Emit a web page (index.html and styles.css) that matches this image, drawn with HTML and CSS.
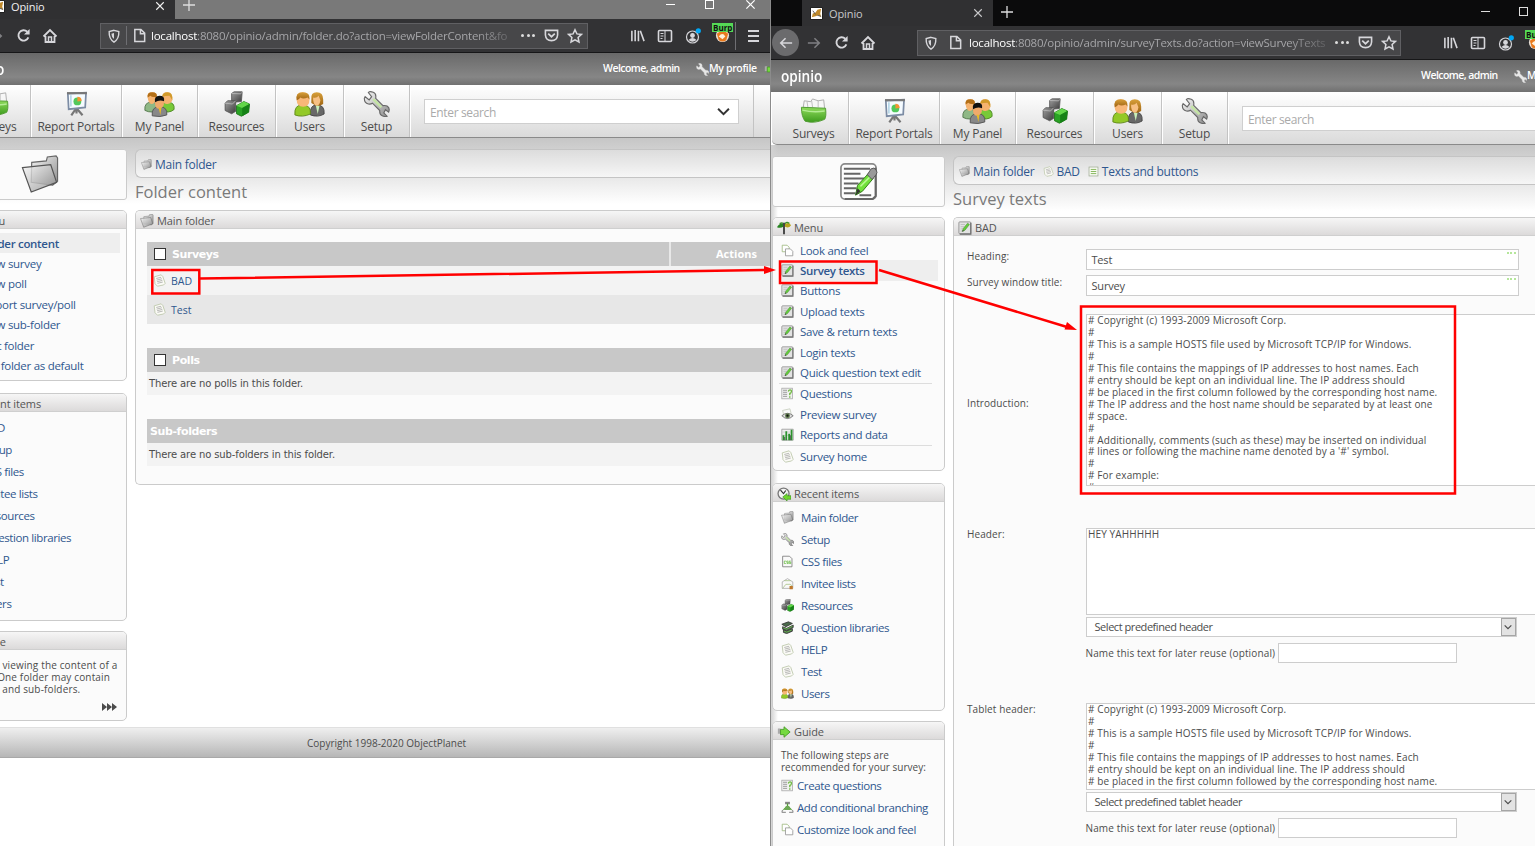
FILE: index.html
```html
<!DOCTYPE html>
<html lang="en">
<head>
<meta charset="utf-8">
<title>Opinio</title>
<link rel="stylesheet" href="styles.css">
</head>
<body>
<svg class="sprite" aria-hidden="true">
  <defs>
    <linearGradient id="gGray" x1="0" y1="0" x2="1" y2="1"><stop offset="0" stop-color="#f6f6f6"/><stop offset="1" stop-color="#8d8d8d"/></linearGradient>
    <linearGradient id="gDark" x1="0" y1="0" x2="1" y2="1"><stop offset="0" stop-color="#a0a0a0"/><stop offset="1" stop-color="#3c3c3c"/></linearGradient>
    <linearGradient id="gGreen" x1="0" y1="0" x2="0" y2="1"><stop offset="0" stop-color="#8fdc5c"/><stop offset="1" stop-color="#3d9b1d"/></linearGradient>
    <linearGradient id="gHair" x1="0" y1="0" x2="0" y2="1"><stop offset="0" stop-color="#d8a03a"/><stop offset="1" stop-color="#9c6110"/></linearGradient>
  </defs>
  <symbol id="folder" viewBox="0 0 40 40"><path d="M11 7.500l15-1.500 1-4 9-1 1.500 2v24l-5 4-22-3z" fill="url(#gGray)" stroke="#666" stroke-width="1.200"/><path d="M1.500 13l9-1V8l15-1.500 1.500 4 3.500-1 6 17-26 11z" fill="none"/><path d="M1.500 13l29-3 6 18-26 10z" fill="url(#gGray)" fill-opacity=".8" stroke="#555" stroke-width="1.200"/></symbol>
  <symbol id="note" viewBox="0 0 16 16"><path d="M1.500 3.500l8.500-2.500 2 2 3 8.500-2 2-7.500 1.500L2.500 12z" fill="#fbfbf6" stroke="#b9c4a6"/><path d="M4 5.500l6-1.500M4.500 7.500l6.500-1.600M5 9.500l6.500-1.600M5.500 11.500l6.500-1.600" stroke="#a0a0a0" fill="none" stroke-width=".9"/></symbol>
  <symbol id="textedit" viewBox="0 0 16 16"><rect x="1" y="1" width="13.500" height="13.500" rx="1" fill="#e2e2e2" stroke="#909090"/><path d="M14.700 2v13H2" fill="none" stroke="#6c6c6c" stroke-width="1.400"/><path d="M3 4h5M3 6.500h4M3 9h3M3 11.500h2" stroke="#bbb"/><path d="M5 12l1-3.500 5-6 2 1.500-5 6.500z" fill="#62cf3a" stroke="#4b7d35" stroke-width=".6"/><path d="M5 12l1.700-.6-1.200-1.200z" fill="#333"/></symbol>
  <symbol id="textlarge" viewBox="0 0 40 40"><rect x="2" y="2" width="36" height="36" rx="4" fill="#fdfdfd" stroke="#8a8a8a" stroke-width="1.800"/><path d="M37.500 6v29l-3 3H6" fill="none" stroke="#666" stroke-width="2"/><path d="M5 7h27M5 12h17M5 17h21M5 22h15M5 27h13M5 32h12M21 34h12" stroke="#666" stroke-width="2"/><path d="M17 34l2-10 11-12 5 5-11 13z" fill="#72e13c" stroke="#317819"/><path d="M22 25l10-10" stroke="#b9f893" stroke-width="1.500"/><path d="M29 13l4-6q3-2 5 1t0 5l-4 5z" fill="#999" stroke="#555"/><path d="M17 34l5-4-3-3z" fill="#333"/></symbol>
  <symbol id="copy" viewBox="0 0 16 16"><path d="M1.500 1.500h6l2.500 2.500v5.500h-8.500z" fill="#fff" stroke="#9cb87c"/><path d="M5.500 6h6l3 3v5.500h-9z" fill="#fff" stroke="#929292"/></symbol>
  <symbol id="quest" viewBox="0 0 16 16"><rect x="1" y="1.500" width="13" height="13" fill="#f2f2f2" stroke="#aaa"/><path d="M2.500 4h5M2.500 6.500h5M2.500 9h5M2.500 11.500h5" stroke="#888"/><path d="M9 5.500q.5-2 2.200-2t1.600 2-2 2.500v2M10.800 11.500v1.800" stroke="#6fba3f" stroke-width="1.600" fill="none"/></symbol>
  <symbol id="lines" viewBox="0 0 16 16"><rect x="1.500" y="1.500" width="13" height="13" fill="#f7fbf2" stroke="#9aa58e"/><path d="M4 5h8M4 8h8M4 11h8" stroke="#86b65c" stroke-width="1.400"/></symbol>
  <symbol id="eye" viewBox="0 0 16 16"><path d="M2 3l9-2 2 8-9 2z" fill="#fafafa" stroke="#c5cdbb"/><path d="M1 9.500q7-6 14 0-7 7-14 0z" fill="#ddd" stroke="#666"/><circle cx="8" cy="9.500" r="3" fill="#5d7a4a"/><circle cx="8" cy="9.500" r="1.400" fill="#111"/></symbol>
  <symbol id="chart" viewBox="0 0 16 16"><path d="M1 1.500h14v13.500H1z" fill="#eee" stroke="#999"/><path d="M1 5h14M1 9h14" stroke="#ccc"/><path d="M3 15V9M6.500 15V4M10 15V7M13 15V2" stroke="#2b922d" stroke-width="2.200"/><path d="M4.500 15v-4M11.600 15V9" stroke="#444"/></symbol>
  <symbol id="palm" viewBox="0 0 16 16"><path d="M8 4Q3 1 0 7q4 2 8-1z" fill="#278421"/><path d="M8 4q6-4 8 1-3 4-8 1z" fill="#b7a51f"/><path d="M3 3q4-2 5 1.500Q10 0 14 2.500" stroke="#3b8f27" fill="none" stroke-width="1.500"/><path d="M8 2v13" stroke="#444" stroke-width="2.200"/></symbol>
  <symbol id="clock" viewBox="0 0 16 16"><circle cx="7.500" cy="7.500" r="6.300" fill="#f4f4f4" stroke="#777" stroke-width="1.500"/><path d="M4 3.500l3.500 4L10 4" stroke="#333" fill="none" stroke-width="1.300"/><path d="M6.500 11.500l5-4v2.500H16v4h-4.500V16z" fill="#70d82e" stroke="#35881b" stroke-width=".7"/></symbol>
  <symbol id="guide" viewBox="0 0 16 16"><path d="M1 4h3v6H1z" fill="#aaa"/><path d="M4 5h4V2l7 6-7 6v-3H4z" fill="#76da40" stroke="#479a26"/></symbol>
  <symbol id="wrench" viewBox="0 0 32 32"><path d="M7 1l-1 1 4 5-3 4-5-4-1 2q0 6 5 7 3 .5 5-1l9 9q-.5 5 3 6.500t6 .5l-4-4 2-4 4 3q2-5-2-7.500-2-1-5-.5l-9-9q1-6-3-7.500Q9 .5 7 1z" fill="url(#gGray)" stroke="#686868" stroke-width="1.400"/><path d="M12 10l10 10" stroke="#c5e6a4" stroke-width="3"/></symbol>
  <symbol id="wrenchlight" viewBox="0 0 32 32"><path d="M7 1l-1 1 4 5-3 4-5-4-1 2q0 6 5 7 3 .5 5-1l9 9q-.5 5 3 6.500t6 .5l-4-4 2-4 4 3q2-5-2-7.500-2-1-5-.5l-9-9q1-6-3-7.500Q9 .5 7 1z" fill="#e8e8e8" stroke="#c4c4c4"/></symbol>
  <symbol id="css" viewBox="0 0 16 16"><path d="M2 1.500h8.500l3 3v10H2z" fill="#fafafa" stroke="#777"/><path d="M6 7.500H4v3h2M9 7.500H7v1.500h2v1.500H7M12 7.500h-2v1.500h2v1.500h-2" fill="none" stroke="#62b938" stroke-width=".9"/></symbol>
  <symbol id="mail" viewBox="0 0 16 16"><path d="M1.500 6L8 2l6.500 4v8h-13z" fill="#f9f9f9" stroke="#aaa"/><path d="M2 14l4-5h5l3 2M4 4.500h8" fill="none" stroke="#a9c188"/><path d="M10.500 11h4v4h-4z" fill="#bf792c"/></symbol>
  <symbol id="cubes" viewBox="0 0 32 32"><path d="M10 3l3-2h10l-1 12-12 1z" fill="url(#gDark)" stroke="#555"/><path d="M2 15l3-3h10v13l-5 3-8-4z" fill="url(#gDark)" stroke="#505050"/><path d="M10 3l11 .500 2-2M2 15l9 1 4-4" stroke="#bbb" fill="none"/><path d="M16 18l9-5 7 3-1 10-9 5-6-3z" fill="#29a224" stroke="#176b12"/><path d="M16 18l7 3 9-5-7-3z" fill="#62d649"/><path d="M23 21v10l8-5 1-10z" fill="#168216"/></symbol>
  <symbol id="books" viewBox="0 0 16 16"><path d="M1 4l8-3 5 2-8 4zM2 7v3l5 2 8-4V5l-8 4zM3 11v3l4 1.500 7-3v-3l-7 3z" fill="#4c6b4c" stroke="#333"/><path d="M3 8.500l4 1.500 7-3.500M4 12.500l3 1.200 6-2.500" stroke="#6ebd52" fill="none"/></symbol>
  <symbol id="branch" viewBox="0 0 16 16"><path d="M5 1h6v3H5z" fill="#888"/><path d="M8 3v4M8 6l-5 5M8 6l5 5" stroke="#55a037" fill="none" stroke-width="1.500"/><path d="M6 6h4l2 5H4z" fill="#6da856"/><path d="M1 14h5M10 14h5M2 11l-1 3M14 11l1 3" stroke="#999" stroke-width="1.500"/></symbol>
  <symbol id="users" viewBox="0 0 34 28"><path d="M18 26q-1-11 7-11 9 0 8 10-7 4-15 1z" fill="#686868" stroke="#444"/><path d="M19 9q-1-8 6-8 7 0 7 8v5l-6 3-7-4z" fill="url(#gHair)"/><path d="M21 7q4 1 6-2l2 5q-1 6-4 6t-4-6z" fill="#f7c084"/><path d="M24 16l2 9 2-9z" fill="#c8efb8"/><path d="M1 26q-1-11 8-11 10 0 9 10-9 4-17 1z" fill="#93c927" stroke="#5f8619"/><path d="M3 10Q2 1 9.500 1T17 9q0 8-7 8T3 10z" fill="#f8b778"/><path d="M3 10Q1 1 9.500 1T17 9l-2-2q-5 2-8 0-1 2-4 3z" fill="url(#gHair)"/></symbol>
  <symbol id="panel" viewBox="0 0 34 28"><path d="M1 21q-1-9 7-9t8 8q-7 5-15 1z" fill="#8fb886" stroke="#54774d"/><path d="M19 21q-1-9 7-9t7 8q-6 5-14 1z" fill="#78c938" stroke="#4a8720"/><path d="M4 7q-1-6 5-6t5 6-5 7-5-7z" fill="#f5b36f"/><path d="M4 7q-1-6 5-6t5 5q-5 1-7-1z" fill="#b36f17"/><path d="M20 7q0-6 5-6t6 6-5 7-6-7z" fill="#f5b36f"/><path d="M20 6q0-5 6-5t5 9l-3-5q-5 0-8 1z" fill="#d19a2b"/><path d="M9 27q-1-10 8-10t8 9q-7 3-16 1z" fill="#888" stroke="#555"/><path d="M12 12q0-6 5-6t5 6-5 7-5-7z" fill="#efaa6c"/><path d="M12 12q-1-7 5-7t5 6q-5-2-10 1z" fill="#111"/><path d="M16 18h3l-1 8z" fill="#e9bd24"/></symbol>
  <symbol id="board" viewBox="0 0 30 30"><path d="M14 21l-5 7M16 21l6 7M15 20v6" stroke="#777" stroke-width="2.500"/><path d="M5 3l21-1-1 17-19 2z" fill="#f5fbff" stroke="#7c8ca4" stroke-width="2"/><path d="M4 2.500h23" stroke="#777" stroke-width="2.500"/><circle cx="16" cy="12" r="4.500" fill="#51c85b"/><path d="M16 12V6.500q5 0 5 5z" fill="#f39533"/><path d="M8.500 5v13" stroke="#b8d8e8" stroke-width="2"/></symbol>
  <symbol id="box" viewBox="0 0 30 28"><path d="M4 10l1-7 7 1 2-3 6 2 6-1 1 10z" fill="#f7f7f7" stroke="#aaa"/><path d="M8 4l1 6M13 3l1 7M20 3v7" stroke="#bbb"/><path d="M2 10l26 1q1 9-1 12-11 5-21 2Q2 20 2 10z" fill="url(#gGreen)" stroke="#4f9a31"/><path d="M3 13q12 3 24 1" stroke="#b4ec94" fill="none" stroke-width="1.500"/></symbol>
  <symbol id="reload" viewBox="0 0 16 16"><path d="M13.200 10A5.500 5.500 0 1 1 12 4" fill="none" stroke="currentColor" stroke-width="2"/><path d="M14.500 1v6H8.500z" fill="currentColor"/></symbol>
  <symbol id="home" viewBox="0 0 16 16"><path d="M1.500 8.500L8 2l6.500 6.500M3.500 8v6h9V8" fill="none" stroke="currentColor" stroke-width="1.800"/><path d="M6.500 14V9h3v5" fill="none" stroke="currentColor" stroke-width="1.500"/></symbol>
  <symbol id="arrow" viewBox="0 0 16 16"><path d="M8.500 2.500L14 8l-5.500 5.500M14 8H1" fill="none" stroke="currentColor" stroke-width="1.800"/></symbol>
  <symbol id="shield" viewBox="0 0 16 16"><path d="M8 1.500l5.500 1.500q.5 8-5.500 12-6-4-5.500-12z" fill="none" stroke="currentColor" stroke-width="1.600"/><path d="M8 4.500v7q-3-2.500-3-6z" fill="currentColor"/></symbol>
  <symbol id="page" viewBox="0 0 16 16"><path d="M3 1.500h6.500l4 4V14.500H3zM9 2v4h4" fill="none" stroke="currentColor" stroke-width="1.600"/></symbol>
  <symbol id="pocket" viewBox="0 0 16 16"><path d="M1.500 2.500h13v5q-.5 6-6.500 6t-6.500-6z" fill="none" stroke="currentColor" stroke-width="1.700"/><path d="M4.500 6L8 9.300 11.500 6" fill="none" stroke="currentColor" stroke-width="1.800"/></symbol>
  <symbol id="star" viewBox="0 0 16 16"><path d="M8 1.800l1.900 4.100 4.500.5-3.300 3.100.9 4.500L8 11.800 4 14l.9-4.500L1.600 6.400l4.500-.5z" fill="none" stroke="currentColor" stroke-width="1.500"/></symbol>
  <symbol id="library" viewBox="0 0 16 16"><path d="M2 3v11M5.500 2v12M9 3v11M11 3l4 11" fill="none" stroke="currentColor" stroke-width="1.700"/></symbol>
  <symbol id="sidebar" viewBox="0 0 16 16"><rect x="1.500" y="2.500" width="13" height="11" rx="1" fill="none" stroke="currentColor" stroke-width="1.600"/><path d="M8 3v10M3.500 5.500h3M3.500 8h3M3.500 10.500h2" stroke="currentColor" fill="none"/></symbol>
  <symbol id="account" viewBox="0 0 16 16"><circle cx="7.500" cy="9" r="6" fill="none" stroke="currentColor" stroke-width="1.200"/><circle cx="7.500" cy="7.500" r="2.400" fill="currentColor"/><path d="M3.500 12q4-4 8 0-4 3.500-8 0z" fill="currentColor"/><circle cx="13.300" cy="2.800" r="2.600" fill="#00a7f5"/></symbol>
  <symbol id="fox" viewBox="0 0 16 16"><circle cx="8" cy="8" r="7" fill="#e8dfd7"/><path d="M2 6q6-5 12 0l-2 7q-4 3-8 0z" fill="#e97a1d"/><path d="M4 9q4-5 7 0l-3 3z" fill="#fff0da"/></symbol>
  <symbol id="cross" viewBox="0 0 12 12"><path d="M1.500 1.500l9 9M10.500 1.500l-9 9" stroke="currentColor" stroke-width="1.300"/></symbol>
  <symbol id="plus" viewBox="0 0 12 12"><path d="M6 0v12M0 6h12" stroke="currentColor" stroke-width="1.300"/></symbol>
  <symbol id="chev" viewBox="0 0 12 12"><path d="M1 3.500l5 5 5-5" fill="none" stroke="currentColor" stroke-width="1.800"/></symbol>
  <symbol id="favicon" viewBox="0 0 14 14"><path d="M.5.500h13v13H.5z" fill="#fff" stroke="#111"/><path d="M2 11l1-4 3-1 2-3 4-1-1 5 1 4-3-2-3 1z" fill="#c18a2b"/><path d="M3 4l3 4M8 9l4 1" stroke="#555"/></symbol>
</svg>

<div class="desktop">
<section class="view view-left">
 <div class="window">
  <div class="tabs">
    <div class="tab"><svg class="i13"><use href="#favicon"/></svg><span>Opinio</span><svg class="i10 close"><use href="#cross"/></svg></div>
    <svg class="i12 newtab"><use href="#plus"/></svg>
    <div class="winbtns"><i class="min"></i><i class="max"></i><svg class="i11"><use href="#cross"/></svg></div>
  </div>
  <div class="toolbar">
    <span class="slot back"><svg class="i14 flip"><use href="#arrow"/></svg></span><span class="slot fwd"><svg class="i14"><use href="#arrow"/></svg></span><span class="slot rel"><svg class="i15"><use href="#reload"/></svg></span><span class="slot"><svg class="i16"><use href="#home"/></svg></span>
    <div class="url"><svg class="i14"><use href="#shield"/></svg><i class="bar"></i><svg class="i15"><use href="#page"/></svg><p class="addr addr-a"><b>localhost</b>:8080/opinio/admin/folder.do?action=viewFolderContent&amp;fo</p><em class="dots"><i></i><i></i><i></i></em><svg class="i15"><use href="#pocket"/></svg><svg class="i16"><use href="#star"/></svg></div>
    <div class="tools"><svg class="i15"><use href="#library"/></svg><svg class="i16"><use href="#sidebar"/></svg><svg class="i16"><use href="#account"/></svg><span class="burp"><svg class="i15"><use href="#fox"/></svg><b>Burp</b></span><i class="bar tall"></i><span class="burger"><i></i><i></i><i></i></span></div>
  </div>
  <div class="app">
   <header class="brand"><strong>opinio</strong><span class="hello">Welcome, admin</span><svg class="i13"><use href="#wrenchlight"/></svg><span class="prof">My profile</span><svg class="i13 out"><use href="#guide"/></svg></header>
   <nav class="nav">
     <a class="n1"><svg class="ic"><use href="#box"/></svg>Surveys</a><a class="n2"><svg class="ic"><use href="#board"/></svg>Report Portals</a><a class="n3"><svg class="ic"><use href="#panel"/></svg>My Panel</a><a class="n4"><svg class="ic"><use href="#cubes"/></svg>Resources</a><a class="n5"><svg class="ic"><use href="#users"/></svg>Users</a><a class="n6"><svg class="ic"><use href="#wrench"/></svg>Setup</a>
     <div class="searchcell"><div class="search"><span>Enter search</span><svg class="i13"><use href="#chev"/></svg></div></div>
   </nav>
   <div class="body">
    <aside class="side">
      <div class="emblem"><svg class="i40"><use href="#folder"/></svg></div>
      <div class="card menu"><h3><svg class="i14"><use href="#palm"/></svg>Menu</h3>
        <ul><li class="on"><svg class="i13"><use href="#folder"/></svg><span>Folder content</span></li><li><svg class="i13"><use href="#note"/></svg>New survey</li><li><svg class="i13"><use href="#note"/></svg>New poll</li><li><svg class="i13"><use href="#note"/></svg>Import survey/poll</li><li><svg class="i13"><use href="#folder"/></svg>New sub-folder</li><li><svg class="i13"><use href="#folder"/></svg>Edit folder</li><li><svg class="i13"><use href="#folder"/></svg>Set folder as default</li></ul></div>
      <div class="card recent"><h3><svg class="i14"><use href="#clock"/></svg>Recent items</h3>
        <ul><li><svg class="i13"><use href="#note"/></svg>BAD</li><li><svg class="i13"><use href="#wrench"/></svg>Setup</li><li><svg class="i13"><use href="#css"/></svg>CSS files</li><li><svg class="i13"><use href="#mail"/></svg>Invitee lists</li><li><svg class="i13"><use href="#cubes"/></svg>Resources</li><li><svg class="i13"><use href="#books"/></svg>Question libraries</li><li><svg class="i13"><use href="#note"/></svg>HELP</li><li><svg class="i13"><use href="#note"/></svg>Test</li><li><svg class="i13"><use href="#users"/></svg>Users</li></ul></div>
      <div class="card guide"><h3><svg class="i14"><use href="#guide"/></svg>Guide</h3>
        <p>You are viewing the content of a<br>folder. One folder may contain<br>surveys and sub-folders.</p>
        <svg class="more" viewBox="0 0 15 8"><path d="M0 0l5 4-5 4zM5 0l5 4-5 4zM10 0l5 4-5 4z" fill="#4c4c4c"/></svg></div>
    </aside>
    <main class="main">
      <div class="crumbs"><svg class="i11"><use href="#folder"/></svg><span>Main folder</span></div>
      <h1>Folder content</h1>
      <div class="card wide list"><h3><svg class="i14"><use href="#folder"/></svg>Main folder</h3>
        <div class="tbl">
          <div class="th"><i class="box"></i><b>Surveys</b><b class="act">Actions</b></div>
          <div class="tr odd"><svg class="i13"><use href="#note"/></svg>BAD</div>
          <div class="tr"><svg class="i13"><use href="#note"/></svg>Test</div>
          <div class="th gap"><i class="box"></i><b>Polls</b></div>
          <div class="none">There are no polls in this folder.</div>
          <div class="th gap sub"><b>Sub-folders</b></div>
          <div class="none">There are no sub-folders in this folder.</div>
        </div>
      </div>
    </main>
   </div>
   <footer class="foot">Copyright 1998-2020 ObjectPlanet</footer>
  </div>
 </div>
</section>

<section class="view view-right">
 <div class="window">
  <div class="tabs">
    <div class="tab"><svg class="i13"><use href="#favicon"/></svg><span>Opinio</span><svg class="i10 close"><use href="#cross"/></svg></div>
    <svg class="i12 newtab"><use href="#plus"/></svg>
    <div class="winbtns"><i class="min"></i><i class="max"></i></div>
  </div>
  <div class="toolbar">
    <span class="slot back"><svg class="i14 flip"><use href="#arrow"/></svg></span><span class="slot fwd"><svg class="i14"><use href="#arrow"/></svg></span><span class="slot rel"><svg class="i15"><use href="#reload"/></svg></span><span class="slot"><svg class="i16"><use href="#home"/></svg></span>
    <div class="url"><svg class="i14"><use href="#shield"/></svg><i class="bar"></i><svg class="i15"><use href="#page"/></svg><p class="addr"><b>localhost</b>:8080/opinio/admin/surveyTexts.do?action=viewSurveyTexts</p><em class="dots"><i></i><i></i><i></i></em><svg class="i15"><use href="#pocket"/></svg><svg class="i16"><use href="#star"/></svg></div>
    <div class="tools"><svg class="i15"><use href="#library"/></svg><svg class="i16"><use href="#sidebar"/></svg><svg class="i16"><use href="#account"/></svg><span class="burp"><svg class="i15"><use href="#fox"/></svg><b>Burp</b></span></div>
  </div>
  <div class="app">
   <header class="brand"><strong>opinio</strong><span class="hello">Welcome, admin</span><svg class="i13"><use href="#wrenchlight"/></svg><span class="prof">My profile</span></header>
   <nav class="nav">
     <a class="n1"><svg class="ic"><use href="#box"/></svg>Surveys</a><a class="n2"><svg class="ic"><use href="#board"/></svg>Report Portals</a><a class="n3"><svg class="ic"><use href="#panel"/></svg>My Panel</a><a class="n4"><svg class="ic"><use href="#cubes"/></svg>Resources</a><a class="n5"><svg class="ic"><use href="#users"/></svg>Users</a><a class="n6"><svg class="ic"><use href="#wrench"/></svg>Setup</a>
     <div class="searchcell"><div class="search"><span>Enter search</span></div></div>
   </nav>
   <div class="body">
    <aside class="side">
      <div class="emblem"><svg class="i40"><use href="#textlarge"/></svg></div>
      <div class="card menu"><h3><svg class="i14"><use href="#palm"/></svg>Menu</h3>
        <ul><li><svg class="i13"><use href="#copy"/></svg>Look and feel</li><li class="on"><svg class="i13"><use href="#textedit"/></svg><span>Survey texts</span></li><li><svg class="i13"><use href="#textedit"/></svg>Buttons</li><li><svg class="i13"><use href="#textedit"/></svg>Upload texts</li><li><svg class="i13"><use href="#textedit"/></svg>Save &amp; return texts</li><li><svg class="i13"><use href="#textedit"/></svg>Login texts</li><li><svg class="i13"><use href="#textedit"/></svg>Quick question text edit</li><li class="rule"><svg class="i13"><use href="#quest"/></svg>Questions</li><li><svg class="i13"><use href="#eye"/></svg>Preview survey</li><li><svg class="i13"><use href="#chart"/></svg>Reports and data</li><li class="rule"><svg class="i13"><use href="#note"/></svg>Survey home</li></ul></div>
      <div class="card recent"><h3><svg class="i14"><use href="#clock"/></svg>Recent items</h3>
        <ul><li><svg class="i13"><use href="#folder"/></svg>Main folder</li><li><svg class="i13"><use href="#wrench"/></svg>Setup</li><li><svg class="i13"><use href="#css"/></svg>CSS files</li><li><svg class="i13"><use href="#mail"/></svg>Invitee lists</li><li><svg class="i13"><use href="#cubes"/></svg>Resources</li><li><svg class="i13"><use href="#books"/></svg>Question libraries</li><li><svg class="i13"><use href="#note"/></svg>HELP</li><li><svg class="i13"><use href="#note"/></svg>Test</li><li><svg class="i13"><use href="#users"/></svg>Users</li></ul></div>
      <div class="card guide steps"><h3><svg class="i14"><use href="#guide"/></svg>Guide</h3>
        <p>The following steps are<br>recommended for your survey:</p>
        <ul><li><svg class="i13"><use href="#quest"/></svg>Create questions</li><li><svg class="i13"><use href="#branch"/></svg>Add conditional branching</li><li><svg class="i13"><use href="#copy"/></svg>Customize look and feel</li></ul></div>
    </aside>
    <main class="main">
      <div class="crumbs"><svg class="i11"><use href="#folder"/></svg><span>Main folder</span><svg class="i11"><use href="#note"/></svg><span>BAD</span><svg class="i11"><use href="#lines"/></svg><span>Texts and buttons</span></div>
      <h1>Survey texts</h1>
      <div class="card wide form"><h3><svg class="i14"><use href="#textedit"/></svg>BAD</h3>
        <div class="row r1"><label>Heading:</label><div class="inp">Test<em class="gd"></em></div></div>
        <div class="row r2"><label>Survey window title:</label><div class="inp">Survey<em class="gd"></em></div></div>
        <div class="row r3"><label>Introduction:</label><pre class="area tall"># Copyright (c) 1993-2009 Microsoft Corp.
#
# This is a sample HOSTS file used by Microsoft TCP/IP for Windows.
#
# This file contains the mappings of IP addresses to host names. Each
# entry should be kept on an individual line. The IP address should
# be placed in the first column followed by the corresponding host name.
# The IP address and the host name should be separated by at least one
# space.
#
# Additionally, comments (such as these) may be inserted on individual
# lines or following the machine name denoted by a '#' symbol.
#
# For example:
#</pre></div>
        <div class="row r4"><label>Header:</label><div class="stack"><pre class="area">HEY YAHHHHH</pre><div class="sel">Select predefined header<span><svg class="i10"><use href="#chev"/></svg></span></div><div class="reuse">Name this text for later reuse (optional)<i></i></div></div></div>
        <div class="row r5"><label>Tablet header:</label><div class="stack"><pre class="area"># Copyright (c) 1993-2009 Microsoft Corp.
#
# This is a sample HOSTS file used by Microsoft TCP/IP for Windows.
#
# This file contains the mappings of IP addresses to host names. Each
# entry should be kept on an individual line. The IP address should
# be placed in the first column followed by the corresponding host name.</pre><div class="sel">Select predefined tablet header<span><svg class="i10"><use href="#chev"/></svg></span></div><div class="reuse">Name this text for later reuse (optional)<i></i></div></div></div>
      </div>
    </main>
   </div>
  </div>
 </div>
</section>
</div>

<svg class="marks" viewBox="0 0 1535 846">
  <g fill="none" stroke="#f00" stroke-width="2.500">
    <path d="M152.300 270h47v23.500h-47zM780 261.500h96.500v21.500H780z"/>
    <path d="M1081 306.500h374v187h-374z"/>
    <path d="M200 278.500L768 270M879 270l188 57"/>
  </g>
  <path d="M776 270l-12-4v8zM1077 330l-12.500-.5 2.500-7.500z" fill="#f00"/>
</svg>
</body>
</html>
```
FILE: styles.css
```css
* { box-sizing: border-box; }
body { margin: 0; width: 1535px; height: 846px; overflow: hidden; background: #fff; position: relative; font-family: "Open Sans", "Noto Sans", sans-serif; font-size: 11px; color: #4c4c4c; white-space: nowrap; }
h1, h3, p, ul, pre { margin: 0; padding: 0; font-weight: normal; }
ul { list-style: none; }
i, em { font-style: normal; }
svg { flex: none; display: block; }
.sprite { position: absolute; width: 0; height: 0; }
.marks { position: absolute; left: 0; top: 0; width: 1535px; height: 846px; }
.i10 { width: 10px; height: 10px; } .i11 { width: 11px; height: 11px; } .i12 { width: 12px; height: 12px; }
.i13 { width: 13px; height: 13px; } .i14 { width: 14px; height: 14px; } .i15 { width: 15px; height: 15px; }
.i16 { width: 16px; height: 16px; } .i40 { width: 39px; height: 39px; }

.desktop { display: flex; width: 1535px; height: 846px; }
.view { height: 846px; overflow: hidden; flex: none; }
.view-left { width: 770px; }
.view-right { width: 765px; border-left: 1px solid #8b8b8b; }
.view-left .window { margin: -7px 0 0 -48px; width: 818px; }
.view-right .window { margin-left: -1px; width: 765px; }

/* browser chrome */
.tabs { height: 26px; display: flex; align-items: center; background: #0b0b0c; color: #c9c9cb; }
.view-left .tabs { background: #797979; }
.tab { width: 191px; height: 26px; margin-left: 32px; padding: 0 10px 0 8px; background: #303032; display: flex; align-items: center; gap: 6px; font-size: 11px; }
.view-left .tab { color: #f2f2f2; }
.tab span { letter-spacing: -.1px; }
.tab .close { margin-left: auto; }
.newtab { margin-left: 8px; margin-top: -2px; color: #ddd; }
.winbtns { margin-left: auto; display: flex; align-items: center; gap: 29px; padding-right: 7px; margin-top: -3px; color: #ddd; }
.winbtns .min { width: 9px; height: 1px; background: currentColor; }
.winbtns .max { width: 9px; height: 9px; border: 1px solid currentColor; }
.view-left .winbtns { gap: 30px; padding-right: 14px; color: #fff; }
.view-left .winbtns svg { margin-left: 1px; }
.toolbar { height: 34px; background: #323234; border-bottom: 1px solid #171718; display: flex; align-items: center; padding-left: 2px; color: #d7d7db; }
.toolbar > * { flex: none; }
.slot { width: 27px; height: 27px; display: flex; align-items: center; justify-content: center; }
.back { background: #6b6b6d; border-radius: 50%; }
.fwd { width: 30px; color: #7f7f82; } .rel { width: 25px; }
.flip { transform: scaleX(-1); }
.url { margin-left: 36px; width: 484px; height: 26px; background: #474749; border: 1px solid #606063; display: flex; align-items: center; padding: 0 4px 0 6px; }
.view-left .url { width: 488px; margin-left: 37px; }
.bar { width: 1px; height: 19px; background: #6f6f73; margin: 0 5px; }
.addr { flex: none; width: 358px; margin-left: 6px; overflow: hidden; font-size: 11.5px; letter-spacing: -.23px; line-height: 20px; color: #a5a5a8; -webkit-mask-image: linear-gradient(90deg, #000 89%, rgba(0,0,0,.25)); mask-image: linear-gradient(90deg, #000 89%, rgba(0,0,0,.25)); }
.addr-a { width: 362px; margin-left: 4px; }
.addr b { font-weight: normal; color: #fff; }
.dots { display: flex; gap: 2.500px; margin: 0 9px 0 8px; }
.dots i { width: 3px; height: 3px; border-radius: 50%; background: #ddd; }
.url .i16 { margin-left: 8px; }
.tools { display: flex; align-items: center; gap: 12px; margin-left: 42px; }
.burp { position: relative; width: 21px; display: flex; justify-content: center; margin-left: -1px; }
.burp b { position: absolute; left: 0; top: -5px; height: 9px; line-height: 9px; font-size: 8px; padding: 0 1px; background: #55d956; color: #111; }
.bar.tall { height: 28px; margin: 0 0 0 -10px; }
.burger { width: 11px; display: grid; gap: 3px; }
.burger i { height: 2px; background: #d7d7db; }

/* application */
.app { background: linear-gradient(#c6c6c6, #fff 66px) 0 85px / 100% 66px no-repeat #fff; }
.view-right .app { background: linear-gradient(90deg, #d2d2d2 1px, rgba(255,255,255,0) 8px) 0 85px no-repeat, linear-gradient(#c6c6c6, #fff 66px) 0 85px / 100% 66px no-repeat #fff; }
.brand { height: 32px; background: linear-gradient(#696969, #868686 75%, #707070); display: flex; align-items: center; color: #fff; padding-left: 11px; }
.brand > * { flex: none; }
.brand strong { width: 640px; font-size: 16px; line-height: 30px; font-weight: 600; transform: scaleX(.85); transform-origin: 0 50%; }
.hello { width: 93px; font-size: 10.500px; font-weight: 600; letter-spacing: -.55px; margin-top: -3px; }
.prof { font-size: 10.500px; font-weight: 600; letter-spacing: -.35px; margin-top: -3px; }
.out { margin-left: 7px; }
.nav { height: 53px; margin-left: 2px; border-radius: 5px 0 0 5px; background: linear-gradient(#fff, #dadada); border-bottom: 1px solid #8a8a8a; display: flex; }
.nav a { height: 52px; border-right: 1px solid #c3c3c3; box-shadow: 1px 0 #fff; display: flex; flex-direction: column; align-items: center; font-size: 12px; line-height: 14px; letter-spacing: -.2px; padding: 6px 0 0; }
.nav .ic { width: 31px; height: 26px; margin-bottom: 3px; }
.nav a.n1 { width: 77px; padding-left: 7px; } .n2 { width: 91px; } .n3 { width: 76px; } .n4 { width: 78px; } .n5 { width: 68px; } .n6 { width: 66px; }
.searchcell { flex: 1; padding: 14px 0 0 14px; }
.view-left .searchcell { flex: none; width: 344px; border-right: 1px solid #c3c3c3; }
.search { height: 25px; background: #fff; border: 1px solid #cfcfcf; padding: 0 8px 0 5px; display: flex; align-items: center; justify-content: space-between; font-size: 12px; letter-spacing: -.35px; color: #aaa; }
.view-left .search { width: 315px; }
.view-right .search { border-right: 0; }
.search span { padding-top: 1px; }
.search svg { color: #333; }
.body { display: flex; gap: 8px; padding: 11px 0 0 2px; }
.side { width: 173px; flex: none; }
.card, .emblem { border: 1px solid #cbcbcb; border-radius: 5px; background: #fbfbfb; }
.emblem { height: 51px; display: flex; align-items: center; justify-content: center; margin-bottom: 10px; border-radius: 3px; }
.card { overflow: hidden; }
.card h3 { height: 18px; background: linear-gradient(#f6f6f6, #dcdada); border-bottom: 1px solid #cfcfcf; display: flex; align-items: center; gap: 3px; padding-left: 4px; font-size: 11px; line-height: 18px; padding-top: 2px; color: #555; letter-spacing: -.1px; }
.card ul { color: #2f578e; font-size: 11.500px; }
.menu { height: 254px; margin-bottom: 12px; }
.view-left .menu { height: 171px; margin-bottom: 12px; }
.menu ul { padding: 4px 6px 0 6px; }
.menu li { height: 20.400px; display: flex; align-items: center; gap: 6px; padding-left: 2px; letter-spacing: -.28px; }
.menu li.on { background: #eee; }
.menu li.on span { font-weight: 600; letter-spacing: -.3px; }
.menu .rule { height: 21.400px; border-top: 1px solid #ddd; width: 153px; }
.recent { height: 228px; margin-bottom: 10px; }
.recent ul { padding: 4px 8px; }
.recent li, .steps li { height: 22.100px; display: flex; align-items: center; gap: 7px; letter-spacing: -.4px; }
.guide { height: 90px; }
.guide.steps { height: 200px; }
.guide p { padding: 9px 8px 0; font-size: 10px; line-height: 12px; letter-spacing: .15px; }
.guide.steps p { letter-spacing: .02px; }
.guide .more { width: 15px; height: 8px; margin: 8px 0 0 147px; }
.steps ul { padding: 1px 8px; }
.steps li { gap: 3px; }
.main { flex: 1; min-width: 0; }
.crumbs { height: 29px; border: 1px solid #c4c4c4; border-right: 0; border-radius: 6px 0 0 6px; background: linear-gradient(#dcdcdc, #f6f6f6); display: flex; align-items: center; gap: 3px; padding: 2px 0 0 5px; font-size: 12px; color: #2f578e; }
.crumbs span { margin-right: 5px; letter-spacing: -.25px; }
h1 { height: 32px; line-height: 28px; font-size: 16.500px; color: #7a7a7a; font-weight: 400; }
.wide { border-right: 0; border-radius: 5px 0 0 5px; }

/* folder listing */
.list { height: 275px; }
.tbl { padding: 13px 0 0 11px; }
.th { height: 24px; background: #c8c8c8; display: flex; align-items: center; gap: 6px; padding-left: 7px; color: #fff; font-size: 11px; font-family: "DejaVu Sans", sans-serif; letter-spacing: -.4px; }
.box { width: 12px; height: 12px; border: 1px solid #333; background: #fff; }
.act { margin-left: auto; width: 101px; height: 24px; line-height: 24px; border-left: 2px solid #e8e8e8; padding-left: 45px; font-family: "Open Sans", sans-serif; letter-spacing: 0; }
.tr { height: 29px; background: #e7e7e7; display: flex; align-items: center; gap: 5px; padding-left: 6px; color: #2f578e; font-size: 10.500px; }
.odd, .none { background: #f3f3f3; }
.gap { margin-top: 24px; }
.sub { padding-left: 3px; }
.none { height: 23px; line-height: 24px; padding-left: 2px; font-size: 10px; font-family: "DejaVu Sans", sans-serif; letter-spacing: -.12px; }
.foot { margin-top: 6px; height: 31px; line-height: 30px; padding-left: 355px; background: linear-gradient(#efefef, #b6b6b6); border-top: 1px solid #e0e0e0; border-bottom: 1px solid #a8a8a8; font-size: 10px; letter-spacing: 0; }

/* survey text form */
.form { height: 700px; font-size: 10px; }
.row { display: grid; grid-template-columns: 118.500px 1fr; padding-left: 13px; }
.row label { line-height: 14px; letter-spacing: .1px; }
.r1 { padding-top: 13px; height: 38.500px; }
.r2 { height: 37px; }
.r3 { padding-top: 2px; height: 216px; }
.r3 label { padding-top: 82px; }
.r4 { height: 175px; } .r4 label, .r5 label { margin-top: -1px; }
.inp { position: relative; width: 433px; height: 21px; border: 1px solid #cdcdcd; background: #fff; padding-left: 5px; line-height: 20px; font-size: 11px; letter-spacing: -.2px; }
.gd { position: absolute; right: 2px; top: 2px; width: 9px; height: 2px; background: repeating-linear-gradient(90deg, #b5e69b 0 2px, #fff 2px 3.500px); }
.area { width: 600px; height: 87px; border: 1px solid #cdcdcd; background: #fff; overflow: hidden; padding: .8px 0 0 1.500px; font: 10px/11.920px "Open Sans", "Noto Sans", sans-serif; letter-spacing: .115px; }
.area.tall { height: 172px; }
.sel { margin-top: 2px; width: 431px; height: 20px; border: 1px solid #cdcdcd; background: #fff; display: flex; justify-content: space-between; align-items: center; padding-left: 8px; font-size: 11px; letter-spacing: -.45px; }
.sel + .reuse { letter-spacing: .14px; }
.r4 .sel { letter-spacing: -.45px; }
.sel span { width: 15px; height: 18px; border: 1px solid #a5a5a5; background: #e3e3e3; display: flex; align-items: center; justify-content: center; }
.sel .i10 { width: 8px; height: 8px; }
.reuse { margin-top: 6px; display: flex; align-items: center; }
.reuse i { margin-left: 3px; width: 179px; height: 20px; border: 1px solid #cdcdcd; background: #fff; }
```
